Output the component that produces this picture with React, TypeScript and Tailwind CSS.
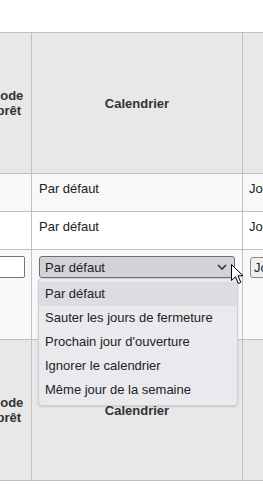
const font = { fontFamily: '"Liberation Sans", Arial, sans-serif' }

const options = [
  'Par défaut',
  'Sauter les jours de fermeture',
  "Prochain jour d'ouverture",
  'Ignorer le calendrier',
  'Même jour de la semaine',
]

function HeaderRow() {
  return (
    <div className="grid h-[141px] grid-cols-[64px_211px_200px] border-b border-[#c0c0c0] bg-[#e8e8e8] text-[13px] font-bold leading-[15px] text-[#333]">
      <div className="flex items-center justify-center border-r border-[#c0c0c0] px-[7px] text-center">
        Période de prêt
      </div>
      <div className="flex items-center justify-center border-r border-[#c0c0c0] px-[7px] text-center">
        Calendrier
      </div>
      <div className="flex items-center justify-center border-r border-[#c0c0c0] px-[7px] text-center">
        Jours
      </div>
    </div>
  )
}

function TextRow({ bg }: { bg: string }) {
  return (
    <div className={`grid h-[38px] grid-cols-[64px_211px_200px] border-b border-[#c0c0c0] text-[13px] leading-[15px] text-[#222] ${bg}`}>
      <div className="border-r border-[#c0c0c0] px-[7px] pt-[7px]" />
      <div className="border-r border-[#c0c0c0] px-[7px] pt-[7px]">Par défaut</div>
      <div className="whitespace-nowrap border-r border-[#c0c0c0] px-[6px] pt-[7px]">Jours</div>
    </div>
  )
}

export default function App() {
  return (
    <div className="relative h-[485px] w-full overflow-hidden bg-white" style={font}>
      <div className="ml-[-32px] mt-[32px] w-[500px] border-t border-[#c0c0c0]">
        <HeaderRow />
        <TextRow bg="bg-[#f8f8f8]" />
        <TextRow bg="bg-white" />

        {/* edit row */}
        <div className="grid h-[90px] grid-cols-[64px_211px_200px] border-b border-[#c0c0c0] bg-[#f8f8f8] text-[13px] leading-[15px] text-[#222]">
          <div className="border-r border-[#c0c0c0] pl-[4px] pr-[6px] pt-[6px]">
            <div className="h-[22px] w-full rounded-[2px] border border-[#767676] bg-white" />
          </div>
          <div className="relative border-r border-[#c0c0c0] px-[7px] pt-[6px]">
            <div className="flex h-[22px] w-full items-center justify-between rounded-[3px] border border-[#6e6e73] bg-[#d2d2d8] pl-[5px] pr-[7px]">
              <span>Par défaut</span>
              <svg width="10" height="6" viewBox="0 0 10 6" fill="none">
                <path d="M1 1 L5 5 L9 1" stroke="#333" strokeWidth="1.6" />
              </svg>
            </div>
            <div className="absolute left-[6px] top-[28px] z-10 w-[200px] rounded-[4px] border border-[#cfcfd5] bg-[#eae9ee] py-[3px] shadow-sm">
              {options.map((o, i) => (
                <div
                  key={o}
                  className={`h-[24px] px-[6px] leading-[24px] text-[#222] ${i === 0 ? 'bg-[#dddce2]' : ''}`}
                >
                  {o}
                </div>
              ))}
            </div>
          </div>
          <div className="border-r border-[#c0c0c0] pl-[7px] pt-[7px]">
            <div className="flex h-[21px] w-[80px] items-center whitespace-nowrap rounded-[3px] border border-[#8a8a8a] bg-[#efeff2] pl-[3px]">
              Jours
            </div>
          </div>
        </div>

        <HeaderRow />
      </div>

      {/* mouse pointer */}
      <svg className="absolute left-[231px] top-[264px] z-20" width="13" height="21" viewBox="0 0 13 21">
        <path
          d="M0.5 0.5 L0.5 16.5 L4.5 12.7 L7.3 19.5 L9.8 18.4 L7 11.8 L12 11.8 Z"
          fill="white"
          stroke="black"
          strokeWidth="1"
          strokeLinejoin="round"
        />
      </svg>
    </div>
  )
}
